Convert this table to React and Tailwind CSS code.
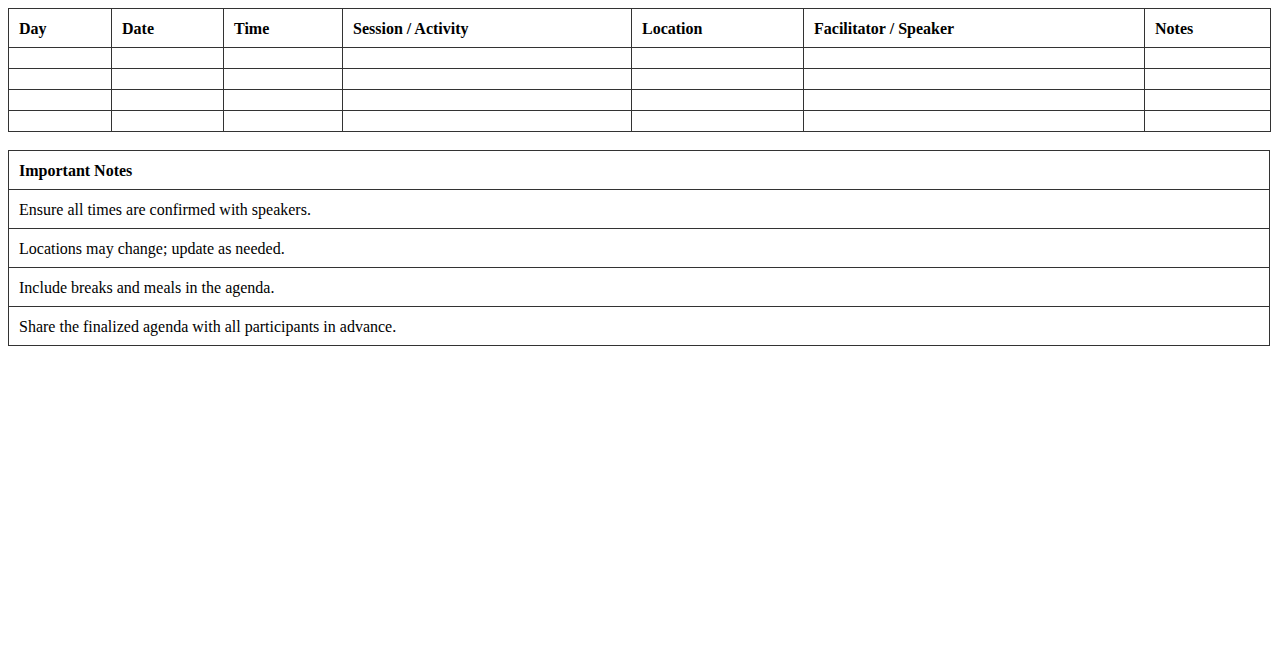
import React from "react";

const columns = [
  { label: "Day", width: "w-[103px]" },
  { label: "Date", width: "w-[112px]" },
  { label: "Time", width: "w-[119px]" },
  { label: "Session / Activity", width: "w-[289px]" },
  { label: "Location", width: "w-[172px]" },
  { label: "Facilitator / Speaker", width: "w-[341px]" },
  { label: "Notes", width: "w-[126px]" },
];

const notes = [
  "Ensure all times are confirmed with speakers.",
  "Locations may change; update as needed.",
  "Include breaks and meals in the agenda.",
  "Share the finalized agenda with all participants in advance.",
];

const App = () => {
  return (
    <div className="min-h-screen bg-white p-2 font-['Liberation_Serif','Times_New_Roman',serif] text-[16px] leading-[18px] text-black">
      {/* Agenda table */}
      <table className="w-full table-fixed border-collapse border border-[#333]">
        <thead>
          <tr>
            {columns.map((c) => (
              <th key={c.label} className={`${c.width} border border-[#333] px-[10px] pt-[11px] pb-[9px] text-left font-bold`}>
                {c.label}
              </th>
            ))}
          </tr>
        </thead>
        <tbody>
          {[0, 1, 2, 3].map((r) => (
            <tr key={r}>
              {columns.map((c) => (
                <td key={c.label} className="border border-[#333] p-[10px]"></td>
              ))}
            </tr>
          ))}
        </tbody>
      </table>

      {/* Notes table */}
      <table className="mt-[18px] w-full border-collapse border border-[#333]">
        <thead>
          <tr>
            <th className="border border-[#333] px-[10px] pt-[11px] pb-[9px] text-left font-bold">Important Notes</th>
          </tr>
        </thead>
        <tbody>
          {notes.map((n) => (
            <tr key={n}>
              <td className="border border-[#333] px-[10px] pt-[11px] pb-[9px]">{n}</td>
            </tr>
          ))}
        </tbody>
      </table>
    </div>
  );
};

export default App;
